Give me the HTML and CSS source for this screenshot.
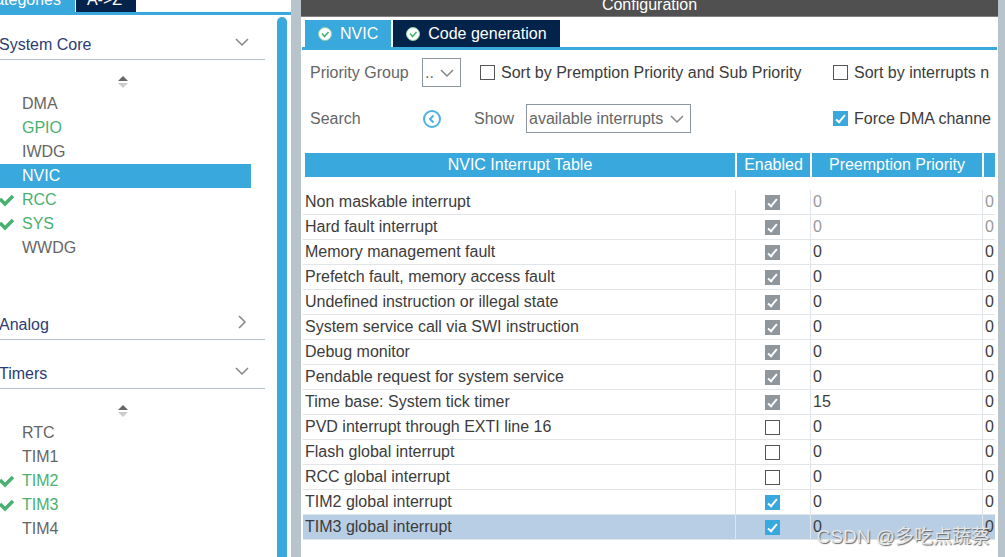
FILE: index.html
```html
<!DOCTYPE html>
<html lang="en">
<head>
  <meta charset="UTF-8">
  <title>NVIC Configuration</title>
  <link rel="stylesheet" href="styles.css">
</head>
<body>

  <div class="app">
    <aside class="sidebar">
      <div class="side-tabs">
        <button class="side-tab active"><span>Categories</span></button>
        <button class="side-tab"><span>A-&gt;Z</span></button>
      </div>

      <div class="side-body">
        <div class="tree">
          <button class="group">System Core
            <svg class="chevron" viewBox="0 0 16 16"><path d="M2 4l6 6 6-6"/></svg>
          </button>
          <div class="sort"><svg width="10" height="14" viewBox="0 0 10 14"><path d="M0 6l5-5 5 5z" fill="#666"/><path d="M0 8h10l-5 5z" fill="#ccc"/></svg></div>
          <ul class="items">
            <li>DMA</li>
            <li class="on">GPIO</li>
            <li>IWDG</li>
            <li class="selected">NVIC</li>
            <li class="on"><svg class="tick" viewBox="0 0 15 13"><path d="M0 5l5 5 8-8"/></svg>RCC</li>
            <li class="on"><svg class="tick" viewBox="0 0 15 13"><path d="M0 5l5 5 8-8"/></svg>SYS</li>
            <li>WWDG</li>
          </ul>

          <button class="group after-list">Analog
            <svg class="chevron" viewBox="0 0 16 16"><path d="M5 1l6 6-6 6"/></svg>
          </button>
          <button class="group next">Timers
            <svg class="chevron" viewBox="0 0 16 16"><path d="M2 4l6 6 6-6"/></svg>
          </button>
          <div class="sort"><svg width="10" height="14" viewBox="0 0 10 14"><path d="M0 6l5-5 5 5z" fill="#666"/><path d="M0 8h10l-5 5z" fill="#ccc"/></svg></div>
          <ul class="items">
            <li>RTC</li>
            <li>TIM1</li>
            <li class="on"><svg class="tick" viewBox="0 0 15 13"><path d="M0 5l5 5 8-8"/></svg>TIM2</li>
            <li class="on"><svg class="tick" viewBox="0 0 15 13"><path d="M0 5l5 5 8-8"/></svg>TIM3</li>
            <li>TIM4</li>
          </ul>
        </div>
        <div class="scrollbar"></div>
      </div>
    </aside>

    <main class="main">
      <h1 class="title"><span>Configuration</span></h1>

      <div class="tabs">
        <button class="tab active">
          <svg class="status" viewBox="0 0 14 14"><circle cx="7" cy="7" r="6.5"/><path d="M4 6.5l2.5 3 4-4.5"/></svg>NVIC
        </button>
        <button class="tab">
          <svg class="status" viewBox="0 0 14 14"><circle cx="7" cy="7" r="6.5"/><path d="M4 6.5l2.5 3 4-4.5"/></svg>Code generation
        </button>
      </div>

      <div class="panel">
        <div class="filters">
          <div class="left">
            <label class="name" for="group">Priority Group</label>
            <span class="combo small">
              <select id="group"><option>..</option></select>
              <svg class="chevron" viewBox="0 0 16 16"><path d="M2 5l6 6 6-6"/></svg>
            </span>
            <label class="check first"><input type="checkbox">Sort by Premption Priority and Sub Priority</label>
          </div>
          <label class="check"><input type="checkbox">Sort by interrupts n</label>

          <div class="left">
            <span class="name">Search</span>
            <button class="search-btn" aria-label="Search">
              <svg width="18" height="18" viewBox="0 0 18 18"><circle cx="9" cy="9" r="8"/><path d="M10.5 5.5L7 9l3.5 3.5"/></svg>
            </button>
            <label class="show" for="show">Show</label>
            <span class="combo">
              <select id="show"><option>available interrupts</option></select>
              <svg class="chevron" viewBox="0 0 16 16"><path d="M2 5l6 6 6-6"/></svg>
            </span>
          </div>
          <label class="check"><input type="checkbox" checked>Force DMA channe</label>
        </div>

        <table>
          <colgroup>
            <col><col class="col-enabled"><col class="col-priority"><col class="col-sub">
          </colgroup>
          <thead>
            <tr><th>NVIC Interrupt Table</th><th>Enabled</th><th>Preemption Priority</th><th></th></tr>
          </thead>
          <tbody>
            <tr class="fixed"><td>Non maskable interrupt</td><td><input type="checkbox" aria-label="Non maskable interrupt" checked disabled></td><td>0</td><td>0</td></tr>
            <tr class="fixed"><td>Hard fault interrupt</td><td><input type="checkbox" aria-label="Hard fault interrupt" checked disabled></td><td>0</td><td>0</td></tr>
            <tr><td>Memory management fault</td><td><input type="checkbox" aria-label="Memory management fault" checked disabled></td><td>0</td><td>0</td></tr>
            <tr><td>Prefetch fault, memory access fault</td><td><input type="checkbox" aria-label="Prefetch fault" checked disabled></td><td>0</td><td>0</td></tr>
            <tr><td>Undefined instruction or illegal state</td><td><input type="checkbox" aria-label="Undefined instruction" checked disabled></td><td>0</td><td>0</td></tr>
            <tr><td>System service call via SWI instruction</td><td><input type="checkbox" aria-label="System service call" checked disabled></td><td>0</td><td>0</td></tr>
            <tr><td>Debug monitor</td><td><input type="checkbox" aria-label="Debug monitor" checked disabled></td><td>0</td><td>0</td></tr>
            <tr><td>Pendable request for system service</td><td><input type="checkbox" aria-label="Pendable request" checked disabled></td><td>0</td><td>0</td></tr>
            <tr><td>Time base: System tick timer</td><td><input type="checkbox" aria-label="Time base" checked disabled></td><td>15</td><td>0</td></tr>
            <tr><td>PVD interrupt through EXTI line 16</td><td><input type="checkbox" aria-label="PVD interrupt"></td><td>0</td><td>0</td></tr>
            <tr><td>Flash global interrupt</td><td><input type="checkbox" aria-label="Flash global interrupt"></td><td>0</td><td>0</td></tr>
            <tr><td>RCC global interrupt</td><td><input type="checkbox" aria-label="RCC global interrupt"></td><td>0</td><td>0</td></tr>
            <tr><td>TIM2 global interrupt</td><td><input type="checkbox" aria-label="TIM2 global interrupt" checked></td><td>0</td><td>0</td></tr>
            <tr class="selected"><td>TIM3 global interrupt</td><td><input type="checkbox" aria-label="TIM3 global interrupt" checked></td><td>0</td><td>0</td></tr>
          </tbody>
        </table>
      </div>
    </main>
  </div>

  <div class="watermark">CSDN @多吃点蔬蔡</div>

</body>
</html>
```

FILE: styles.css
```css
* {
  box-sizing: border-box;
}
body {
  margin: 0;
  font-family: "Liberation Sans", Arial, sans-serif;
  font-size: 16px;
  line-height: 20px;
  color: #3c3c3c;
  background-color: white;
  overflow: hidden;
}
button, select {
  font: inherit;
  color: inherit;
  background: none;
  border: none;
  padding: 0;
  margin: 0;
}
.app {
  display: flex;
  min-height: 100vh;
  border-right: 7px solid #b8c4cb;
}

/* left side */
.sidebar {
  flex: 0 0 301px;
  display: flex;
  flex-direction: column;
  border-right: 10px solid #b8c4cb;
}
.side-tabs {
  display: flex;
  height: 15px;
  border-bottom: 3px solid #39a8dc;
}
.side-tab {
  display: flex;
  align-items: flex-end;
  justify-content: flex-end;
  width: 60px;
  padding: 0 14px 2px 0;
  color: white;
  background-color: #03234b;
}
.side-tab.active {
  width: 76px;
  border-right: 1px solid white;
  background-color: #39a8dc;
}
.side-body {
  flex: 1;
  display: flex;
  justify-content: space-between;
  padding-right: 4px;
}
.tree {
  width: 265px;
}
.scrollbar {
  width: 10px;
  margin-top: 2px;
  border-radius: 5px 5px 0 0;
  background-color: #39a8dc;
}
.group {
  display: flex;
  justify-content: space-between;
  width: 100%;
  height: 45px;
  padding: 20px 15px 0 0;
  text-indent: -1px;
  color: #2c3c72;
  border-bottom: 1px solid #b8c4cb;
}
.group.after-list {
  margin-top: 35px;
}
.group.next {
  margin-top: 4px;
}
.chevron {
  width: 16px;
  height: 16px;
  fill: none;
  stroke: #868686;
  stroke-width: 1.5;
}
.sort {
  height: 32px;
  padding: 15px 0 0 118px;
  line-height: 0;
}
.items {
  list-style: none;
  margin: 0;
  padding: 0;
}
.items li {
  display: flex;
  align-items: center;
  justify-content: flex-start;
  width: 251px;
  height: 24px;
  padding-left: 22px;
  color: #666;
}
.items li.on {
  color: #49b170;
}
.items li.selected {
  color: white;
  background-color: #39a8dc;
}
.tick {
  width: 15px;
  height: 13px;
  margin: 0 7px 0 -22px;
  fill: none;
  stroke: #49b170;
  stroke-width: 3.5;
}

/* right side */
.main {
  flex: 1;
  min-width: 0;
}
.title {
  display: flex;
  align-items: flex-end;
  justify-content: center;
  height: 17px;
  margin: 0;
  padding-bottom: 1px;
  font-size: 16px;
  font-weight: normal;
  color: white;
  background-color: #4f504f;
  border-bottom: 1px solid #808080;
}
.tabs {
  display: flex;
  gap: 2px;
  margin: 3px 1px 0;
  padding-left: 3px;
  border-bottom: 3px solid #39a8dc;
}
.tab {
  display: flex;
  align-items: center;
  gap: 8px;
  height: 27px;
  padding: 0 13px;
  color: white;
  background-color: #03234b;
}
.tab.active {
  background-color: #39a8dc;
}
.status {
  width: 14px;
  height: 14px;
  fill: white;
  stroke: #8fd0a5;
  stroke-width: 1;
}
.status path {
  fill: none;
  stroke: #49b170;
  stroke-width: 1.5;
}
.panel {
  margin: 0 3px 0 2px;
  overflow: hidden;
}
.filters {
  display: grid;
  grid-template-columns: 1fr 162px;
  row-gap: 17px;
  align-items: center;
  margin: 8px 0 20px;
  padding-left: 7px;
  white-space: nowrap;
  overflow: hidden;
}
.left {
  display: flex;
  align-items: center;
  color: #666;
}
.name {
  width: 112px;
}
.combo {
  position: relative;
  width: 165px;
  height: 29px;
  border: 1px solid #8c979e;
}
.combo.small {
  width: 39px;
}
.combo select {
  appearance: none;
  width: 100%;
  height: 100%;
  padding-left: 2px;
}
.combo .chevron {
  position: absolute;
  top: 6px;
  right: 5px;
  pointer-events: none;
}
.search-btn {
  display: flex;
  margin: 0 33px 0 1px;
}
.search-btn svg {
  fill: none;
  stroke: #4db2e1;
  stroke-width: 2;
}
.show {
  width: 52px;
}
.check {
  display: flex;
  align-items: center;
  gap: 6px;
  color: #3c3c3c;
}
.check.first {
  margin-left: 19px;
}
input[type="checkbox"] {
  appearance: none;
  flex: none;
  display: block;
  width: 15px;
  height: 15px;
  margin: 0;
  border: 1px solid #555;
  background-color: white;
}
input[type="checkbox"]:checked {
  border-color: #39a8dc;
  background-color: #39a8dc;
}
input[type="checkbox"]:disabled {
  border-color: #8f979d;
  background-color: #8f979d;
}
input[type="checkbox"]:checked::after {
  content: "";
  display: block;
  width: 5px;
  height: 10px;
  margin: 1px 0 0 4px;
  box-sizing: border-box;
  border: solid white;
  border-width: 0 2px 2px 0;
  transform: rotate(40deg);
}

/* interrupt table */
table {
  width: 100%;
  table-layout: fixed;
  border-spacing: 0;
}
.col-enabled {
  width: 75px;
}
.col-priority {
  width: 172px;
}
.col-sub {
  width: 12px;
}
th {
  height: 37px;
  padding: 0;
  font-weight: normal;
  color: white;
  background-color: #39a8dc;
  background-clip: padding-box;
  border: solid white;
  border-width: 0 1px 13px;
}
th:first-child {
  border-left-width: 2px;
}
th:last-child {
  border-right: none;
}
td {
  height: 25px;
  padding: 0 0 0 2px;
  white-space: nowrap;
  border-right: 1px solid #e2e5e8;
  border-bottom: 1px solid #e2e5e8;
}
td:nth-child(2) {
  padding: 0 2px 0 0;
}
td:last-child {
  border-right: none;
}
td input[type="checkbox"] {
  margin: 0 auto;
}
.fixed td:nth-child(n+3) {
  color: #999;
}
tr.selected td {
  background-color: #b8cee5;
}

.watermark {
  position: absolute;
  right: 15px;
  bottom: 8px;
  font-family: "Liberation Sans", "Noto Sans CJK SC", sans-serif;
  font-size: 19px;
  line-height: 24px;
  color: #e4e6e8;
  text-shadow: 1px 1px 1px #666;
}
```
